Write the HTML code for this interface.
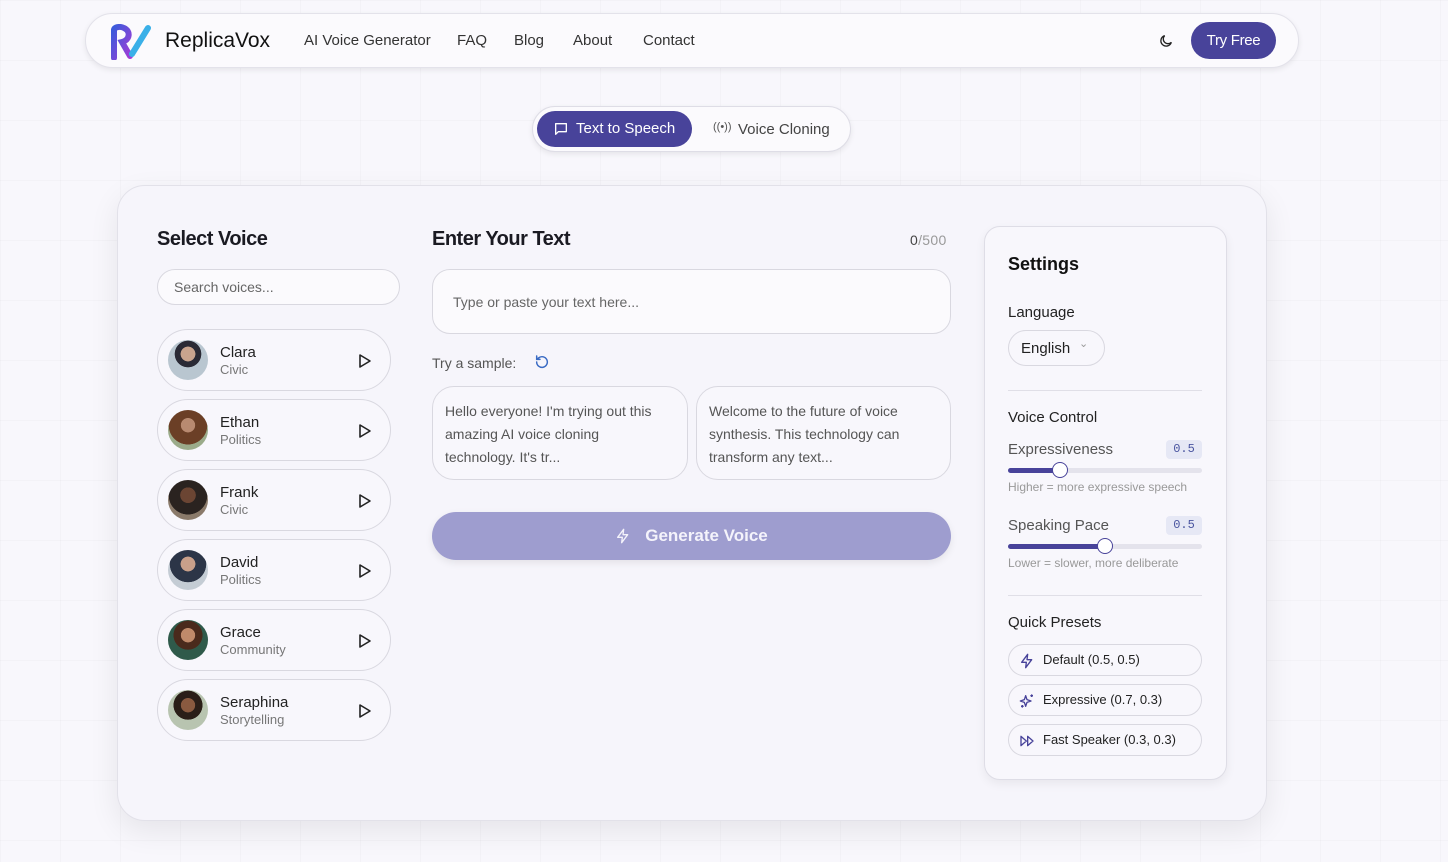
<!DOCTYPE html>
<html><head><meta charset="utf-8"><style>
*{box-sizing:border-box;margin:0;padding:0}
body{width:1448px;height:862px;overflow:hidden;background:#f8f7fc;font-family:"Liberation Sans",sans-serif;color:#1a1a22;position:relative;
background-image:linear-gradient(rgba(0,0,0,0.018) 1px,transparent 1px),linear-gradient(90deg,rgba(0,0,0,0.018) 1px,transparent 1px);background-size:60px 60px}
.a{position:absolute}
.nav{left:85px;top:13px;width:1214px;height:55px;border-radius:28px;background:#fbfafd;border:1px solid #e3e2ea;box-shadow:0 2px 6px rgba(0,0,0,0.08)}
.nav .l{position:absolute;top:18px;font-size:15px;color:#333}
.tabs{left:532px;top:106px;width:319px;height:46px;border-radius:23px;background:#fbfafd;border:1px solid #dedde6;box-shadow:0 2px 6px rgba(0,0,0,0.08)}
.card{left:117px;top:185px;width:1150px;height:636px;border-radius:28px;background:#f6f5fb;border:1px solid #e2e1e9;box-shadow:0 10px 30px rgba(0,0,0,0.08)}
h2{font-size:20px;font-weight:bold;letter-spacing:-0.5px;position:absolute}
.pill{position:absolute;border:1px solid #d9d8e0;background:#f8f7fc}
.voice{position:absolute;left:157px;width:234px;height:62px;border-radius:31px;border:1px solid #d9d8e0;background:#f8f7fc}
.voice .av{position:absolute;left:10px;top:10px;width:40px;height:40px;border-radius:50%}
.voice .n{position:absolute;left:62px;top:14px;font-size:15px;color:#222}
.voice .s{position:absolute;left:62px;top:32px;font-size:13px;color:#777}
.voice svg{position:absolute;left:200px;top:23px}
.set{left:984px;top:226px;width:243px;height:554px;border-radius:16px;background:#f8f7fc;border:1px solid #dedde6;box-shadow:0 4px 10px rgba(0,0,0,0.06)}
.t{position:absolute;font-size:15px;color:#222}
.sm{position:absolute;font-size:12px;color:#999}
.badge{position:absolute;left:1166px;width:36px;height:19px;border-radius:4px;background:#e6e8f5;color:#4a55a0;font-family:"Liberation Mono",monospace;font-size:12px;text-align:center;line-height:19px}
.track{position:absolute;left:1008px;width:194px;height:5px;border-radius:3px;background:#e4e3ec}
.fill{position:absolute;left:0;top:0;height:5px;border-radius:3px;background:#48439a}
.knob{position:absolute;top:-6px;width:16px;height:16px;border-radius:50%;background:#fff;border:1.5px solid #48439a}
.preset{position:absolute;left:1008px;width:194px;height:32px;border-radius:16px;border:1px solid #d9d8e0;font-size:13px;color:#222;padding-left:34px;line-height:30px}
.preset svg{position:absolute;left:10px;top:8px}
.hr{position:absolute;left:1008px;width:194px;height:1px;background:#e0dfe7}
</style></head><body>
<div class="a nav">
 <svg class="a" style="left:24px;top:10px" width="42" height="36" viewBox="0 0 42 36"><defs><linearGradient id="g" x1="0" y1="0" x2="1" y2="1"><stop offset="0" stop-color="#3b5bdb"/><stop offset="1" stop-color="#a33bd6"/></linearGradient></defs><path d="M4 34V6c0-3 6-4 10-2 7 3 6 12-2 14l8 14" fill="none" stroke="url(#g)" stroke-width="6" stroke-linecap="round"/><path d="M22 30L38 4" stroke="#3ab0e8" stroke-width="6" stroke-linecap="round"/></svg>
 <div class="a" style="left:79px;top:15px;font-size:21px;color:#111">ReplicaVox</div>
 <div class="l" style="left:218px">AI Voice Generator</div>
 <div class="l" style="left:371px">FAQ</div>
 <div class="l" style="left:428px">Blog</div>
 <div class="l" style="left:487px">About</div>
 <div class="l" style="left:557px">Contact</div>
 <svg class="a" style="left:1072px;top:19px" width="16" height="16" viewBox="0 0 24 24"><path d="M20 14A8 8 0 1 1 10 4a7 7 0 0 0 10 10z" fill="none" stroke="#222" stroke-width="2"/></svg>
 <div class="a" style="left:1105px;top:8px;width:85px;height:37px;border-radius:19px;background:#48439a;color:#fff;font-size:15px;text-align:center;line-height:37px;letter-spacing:-0.3px">Try Free</div>
</div>
<div class="a tabs">
 <div class="a" style="left:4px;top:4px;width:155px;height:36px;border-radius:18px;background:#48439a;color:#fff;font-size:15px;line-height:36px;padding-left:39px">Text to Speech</div>
 <svg class="a" style="left:20px;top:14px" width="16" height="16" viewBox="0 0 24 24"><path d="M4 4h16v12H8l-4 4z" fill="none" stroke="#fff" stroke-width="2" stroke-linejoin="round"/></svg>
 <div class="a" style="left:180px;top:14px;font-size:11px;color:#555">((•))</div>
 <div class="a" style="left:205px;top:14px;font-size:15px;color:#444">Voice Cloning</div>
</div>
<div class="a card"></div>
<h2 style="left:157px;top:228px">Select Voice</h2>
<div class="pill" style="left:157px;top:269px;width:243px;height:36px;border-radius:18px;background:#fbfafd"><span class="a" style="left:16px;top:9px;font-size:14px;color:#666">Search voices...</span></div>
<div class="voice" style="top:329px"><div class="av" style="background:radial-gradient(circle at 50% 35%,#c9a48e 0 22%,#2a2a35 23% 40%,#b9c6d0 41%)"></div><div class="n">Clara</div><div class="s">Civic</div><svg width="14" height="16" viewBox="0 0 14 16"><path d="M2 2l10 6-10 6z" fill="none" stroke="#222" stroke-width="1.6" stroke-linejoin="round"/></svg></div>
<div class="voice" style="top:399px"><div class="av" style="background:radial-gradient(circle at 50% 38%,#b88a70 0 22%,#6b3f26 23% 60%,#9bab8a 61%)"></div><div class="n">Ethan</div><div class="s">Politics</div><svg width="14" height="16" viewBox="0 0 14 16"><path d="M2 2l10 6-10 6z" fill="none" stroke="#222" stroke-width="1.6" stroke-linejoin="round"/></svg></div>
<div class="voice" style="top:469px"><div class="av" style="background:radial-gradient(circle at 50% 38%,#6b4533 0 24%,#2a2320 25% 60%,#8a7a6a 61%)"></div><div class="n">Frank</div><div class="s">Civic</div><svg width="14" height="16" viewBox="0 0 14 16"><path d="M2 2l10 6-10 6z" fill="none" stroke="#222" stroke-width="1.6" stroke-linejoin="round"/></svg></div>
<div class="voice" style="top:539px"><div class="av" style="background:radial-gradient(circle at 50% 35%,#c9a08a 0 22%,#2c3547 23% 55%,#c4ccd4 56%)"></div><div class="n">David</div><div class="s">Politics</div><svg width="14" height="16" viewBox="0 0 14 16"><path d="M2 2l10 6-10 6z" fill="none" stroke="#222" stroke-width="1.6" stroke-linejoin="round"/></svg></div>
<div class="voice" style="top:609px"><div class="av" style="background:radial-gradient(circle at 50% 38%,#c08a6a 0 22%,#4a2a1c 23% 45%,#2f5a4a 46%)"></div><div class="n">Grace</div><div class="s">Community</div><svg width="14" height="16" viewBox="0 0 14 16"><path d="M2 2l10 6-10 6z" fill="none" stroke="#222" stroke-width="1.6" stroke-linejoin="round"/></svg></div>
<div class="voice" style="top:679px"><div class="av" style="background:radial-gradient(circle at 50% 38%,#8a5a40 0 22%,#2a1e18 23% 45%,#b8c4b0 46%)"></div><div class="n">Seraphina</div><div class="s">Storytelling</div><svg width="14" height="16" viewBox="0 0 14 16"><path d="M2 2l10 6-10 6z" fill="none" stroke="#222" stroke-width="1.6" stroke-linejoin="round"/></svg></div>

<h2 style="left:432px;top:228px">Enter Your Text</h2>
<div class="a" style="left:910px;top:232px;font-size:14px;color:#999;letter-spacing:0.3px"><b style="color:#444;font-weight:normal">0</b>/500</div>
<div class="pill" style="left:432px;top:269px;width:519px;height:65px;border-radius:18px;background:#fbfafd"><span class="a" style="left:20px;top:24px;font-size:14px;color:#666">Type or paste your text here...</span></div>
<div class="a" style="left:432px;top:355px;font-size:14px;color:#555">Try a sample:</div>
<svg class="a" style="left:534px;top:354px" width="16" height="16" viewBox="0 0 24 24"><path d="M4 12a8 8 0 1 0 3-6.2L4 8M4 3v5h5" fill="none" stroke="#3a6bc4" stroke-width="2.2" stroke-linecap="round"/></svg>
<div class="pill" style="left:432px;top:386px;width:256px;height:94px;border-radius:22px;padding:13px 26px 12px 12px;font-size:14px;line-height:23px;color:#555">Hello everyone! I'm trying out this amazing AI voice cloning technology. It's tr...</div>
<div class="pill" style="left:696px;top:386px;width:255px;height:94px;border-radius:22px;padding:13px 26px 12px 12px;font-size:14px;line-height:23px;color:#555">Welcome to the future of voice synthesis. This technology can transform any text...</div>
<div class="a" style="left:432px;top:512px;width:519px;height:48px;border-radius:24px;background:#9e9dcf;color:#f4f3fb;font-size:17px;font-weight:bold;text-align:center;line-height:48px;box-shadow:0 3px 8px rgba(0,0,0,0.08)"><svg style="vertical-align:-3px;margin-right:14px" width="16" height="16" viewBox="0 0 24 24"><path d="M13 2L4 14h7l-1 8 9-12h-7z" fill="none" stroke="#f4f3fb" stroke-width="2" stroke-linejoin="round"/></svg>Generate Voice</div>

<div class="a set"></div>
<div class="a" style="left:1008px;top:254px;font-size:18px;font-weight:bold;color:#111">Settings</div>
<div class="t" style="left:1008px;top:304px">Language</div>
<div class="pill" style="left:1008px;top:330px;width:97px;height:36px;border-radius:18px"><span class="a" style="left:12px;top:9px;font-size:15px;color:#222">English</span><span class="a" style="left:70px;top:6px;font-size:11px;color:#999">⌄</span></div>
<div class="hr" style="top:390px"></div>
<div class="t" style="left:1008px;top:409px">Voice Control</div>
<div class="t" style="left:1008px;top:441px;color:#555">Expressiveness</div>
<div class="badge" style="top:440px">0.5</div>
<div class="track" style="top:468px"><div class="fill" style="width:52px"></div><div class="knob" style="left:44px"></div></div>
<div class="sm" style="left:1008px;top:480px">Higher = more expressive speech</div>
<div class="t" style="left:1008px;top:517px;color:#555">Speaking Pace</div>
<div class="badge" style="top:516px">0.5</div>
<div class="track" style="top:544px"><div class="fill" style="width:97px"></div><div class="knob" style="left:89px"></div></div>
<div class="sm" style="left:1008px;top:556px">Lower = slower, more deliberate</div>
<div class="hr" style="top:595px"></div>
<div class="t" style="left:1008px;top:614px">Quick Presets</div>
<div class="preset" style="top:644px"><svg width="16" height="16" viewBox="0 0 24 24"><path d="M13 2L4 14h7l-1 8 9-12h-7z" fill="none" stroke="#48439a" stroke-width="2" stroke-linejoin="round"/></svg>Default (0.5, 0.5)</div>
<div class="preset" style="top:684px"><svg width="16" height="16" viewBox="0 0 24 24"><path d="M10 4l2 6 6 2-6 2-2 6-2-6-6-2 6-2zM19 2v4M17 4h4M5 18v4M3 20h4" fill="none" stroke="#48439a" stroke-width="2" stroke-linejoin="round"/></svg>Expressive (0.7, 0.3)</div>
<div class="preset" style="top:724px"><svg width="16" height="16" viewBox="0 0 24 24"><path d="M3 5l8 7-8 7zM13 5l8 7-8 7z" fill="none" stroke="#48439a" stroke-width="2" stroke-linejoin="round"/></svg>Fast Speaker (0.3, 0.3)</div>
</body></html>
